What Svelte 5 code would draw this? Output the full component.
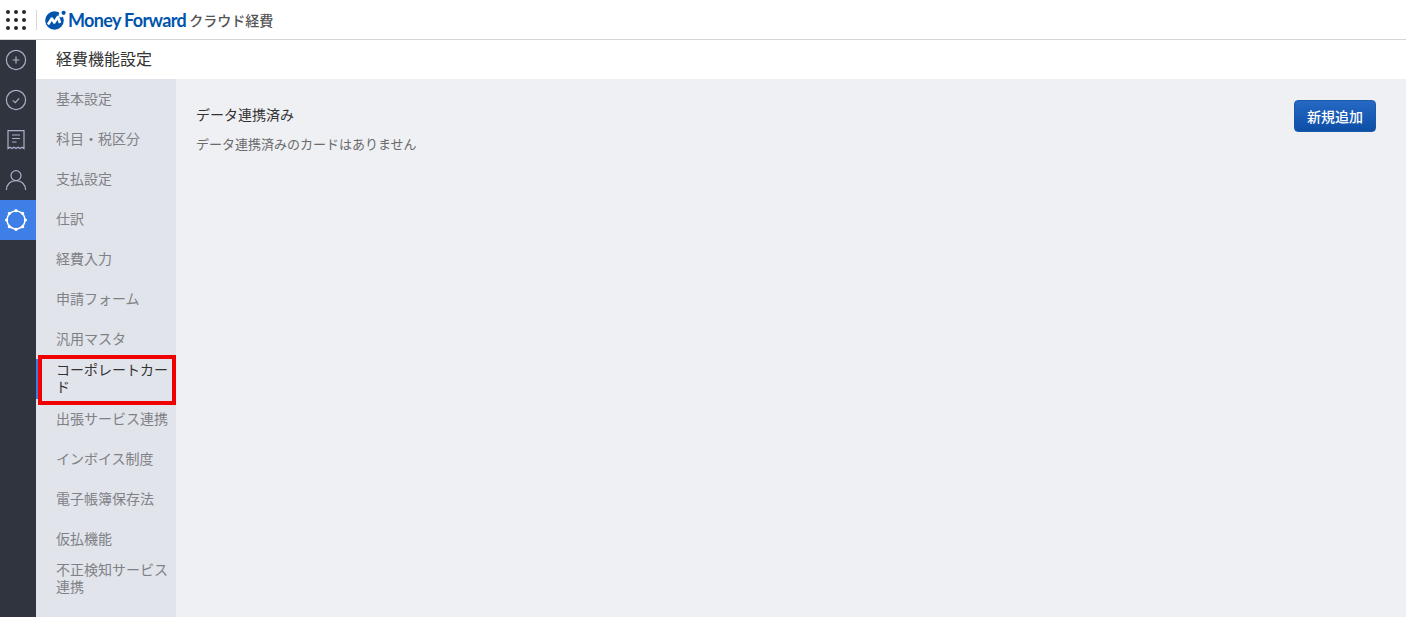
<script>
  const menu = [
    '基本設定', '科目・税区分', '支払設定', '仕訳', '経費入力', '申請フォーム', '汎用マスタ',
    'コーポレートカード', '出張サービス連携', 'インボイス制度', '電子帳簿保存法', '仮払機能', '不正検知サービス連携'
  ]
  const active = 'コーポレートカード'
  const dots = Array(9).fill(0)
  // the eight small knobs around the settings ring
  const nubs = [0, 45, 90, 135, 180, 225, 270, 315]
</script>

<div class="page">
  <header class="topbar">
    <div class="apps">
      {#each dots as _}<i></i>{/each}
    </div>
    <div class="sep"></div>
    <svg class="mark" viewBox="0 0 21 20" width="21" height="20">
      <circle cx="9.5" cy="10.5" r="9.3" fill="#0054ac" />
      <path d="M3 14.5 L6.8 8.5 L9.3 12.5 L13 6.8 L15 13" fill="none" stroke="#fff" stroke-width="2.6" stroke-linejoin="round" />
      <circle cx="16" cy="5" r="2.4" fill="#fff" />
      <circle cx="18.6" cy="2.8" r="2.1" fill="#0054ac" />
    </svg>
    <span class="brand">Money Forward</span>
    <span class="product">クラウド経費</span>
  </header>

  <div class="body">
    <nav class="rail">
      <a class="railitem" href="#add">
        <svg viewBox="0 0 24 24"><circle cx="12" cy="12" r="9.6" /><path d="M12 8.6v6.8M8.6 12h6.8" /></svg>
      </a>
      <a class="railitem" href="#check">
        <svg viewBox="0 0 24 24"><circle cx="12" cy="12" r="9.6" /><path d="M8.8 12.4l2.4 2.2 4-4.2" /></svg>
      </a>
      <a class="railitem" href="#receipt">
        <svg viewBox="0 0 24 24"><path d="M4 2.6h16v18l-2-1.4-2 1.4-2-1.4-2 1.4-2-1.4-2 1.4-2-1.4-2 1.4z" /><path d="M8 7h8M8 10.5h8M8 14h4.5" /></svg>
      </a>
      <a class="railitem" href="#user">
        <svg viewBox="0 0 24 24"><circle cx="12" cy="7.6" r="5" /><path d="M2.4 22c0-5.6 4-9.4 9.6-9.4s9.6 3.8 9.6 9.4" /></svg>
      </a>
      <a class="railitem current" href="#settings">
        <svg viewBox="0 0 24 24">
          <circle cx="12" cy="12" r="9" />
          {#each nubs as deg}
            <circle class="nub" cx="12" cy="2.6" r="1.6" transform="rotate({deg} 12 12)" />
          {/each}
        </svg>
      </a>
    </nav>

    <div class="main">
      <div class="pagetitle">経費機能設定</div>
      <div class="columns">
        <aside class="side">
          {#each menu as item}
            <a class="sideitem" class:active={item === active} href="#menu">
              <span>{item}</span>
              {#if item === active}<span class="highlight"></span>{/if}
            </a>
          {/each}
        </aside>
        <section class="content">
          <div class="text">
            <h2>データ連携済み</h2>
            <p>データ連携済みのカードはありません</p>
          </div>
          <button type="button">新規追加</button>
        </section>
      </div>
    </div>
  </div>
</div>

<style>
  :global(body) {
    margin: 0;
    overflow: hidden;
  }

  .page {
    width: 1406px;
    height: 617px;
    display: flex;
    flex-direction: column;
    font-family: "Liberation Sans", "Noto Sans CJK JP", sans-serif;
    overflow: hidden;
  }

  .topbar {
    height: 39px;
    flex: none;
    display: flex;
    align-items: center;
    background: #fff;
    border-bottom: 1px solid #d4d6da;
  }

  .apps {
    width: 20px;
    margin-left: 6px;
    display: grid;
    grid-template-columns: repeat(3, 4px);
    gap: 4px;
  }

  .apps i {
    width: 4px;
    height: 4px;
    border-radius: 50%;
    background: #24272e;
  }

  .sep {
    width: 1px;
    height: 20px;
    margin-left: 10px;
    background: #d8d8d8;
  }

  .mark {
    margin-left: 8px;
  }

  .brand {
    margin-left: 2px;
    font-family: Lato, sans-serif;
    font-size: 18px;
    font-weight: 700;
    letter-spacing: -0.65px;
    color: #0054ac;
    white-space: nowrap;
  }

  .product {
    margin-left: 3px;
    font-size: 14px;
    font-weight: 500;
    color: #555;
    white-space: nowrap;
  }

  .body {
    flex: 1;
    display: flex;
    min-height: 0;
  }

  .rail {
    width: 36px;
    flex: none;
    background: #2f343f;
    display: flex;
    flex-direction: column;
  }

  .railitem {
    height: 40px;
    box-sizing: border-box;
    padding-right: 4px;
    display: flex;
    align-items: center;
    justify-content: center;
  }

  .railitem svg {
    width: 24px;
    height: 24px;
    fill: none;
    stroke: #a9b2cc;
    stroke-width: 1.2;
  }

  .railitem.current {
    background: #3d7fe6;
  }

  .railitem.current svg {
    stroke: #fff;
    stroke-width: 1.5;
  }

  .railitem .nub {
    fill: #fff;
    stroke: none;
  }

  .main {
    flex: 1;
    display: flex;
    flex-direction: column;
    min-width: 0;
  }

  .pagetitle {
    height: 39px;
    flex: none;
    box-sizing: border-box;
    padding-left: 20px;
    line-height: 39px;
    font-size: 16px;
    color: #333;
    background: #fff;
  }

  .columns {
    flex: 1;
    display: flex;
    min-height: 0;
  }

  .side {
    width: 140px;
    flex: none;
    background: #e1e4eb;
  }

  .sideitem {
    position: relative;
    height: 40px;
    box-sizing: border-box;
    padding: 0 8px 0 20px;
    display: flex;
    align-items: center;
    font-size: 14px;
    line-height: 17px;
    color: #7f8186;
    text-decoration: none;
  }

  .sideitem.active {
    color: #333;
    border-left: 2px solid #3d7fe6;
    padding-left: 18px;
  }

  /* red annotation box drawn over the current menu item */
  .highlight {
    position: absolute;
    left: 0;
    top: -4px;
    width: 138px;
    height: 50px;
    box-sizing: border-box;
    border: 4px solid #f00000;
  }

  .content {
    flex: 1;
    background: #eff0f4;
    padding: 21px 30px 0 20px;
    display: flex;
    justify-content: space-between;
    align-items: flex-start;
  }

  .text {
    padding-top: 7px;
  }

  h2 {
    margin: 0;
    font-size: 14px;
    font-weight: 400;
    line-height: 17px;
    color: #333;
  }

  p {
    margin: 12px 0 0;
    font-size: 13px;
    line-height: 17px;
    color: #6b6b6b;
  }

  button {
    width: 82px;
    height: 32px;
    padding: 0;
    border: 1px solid #1a5ba8;
    border-radius: 4px;
    background: linear-gradient(#2569c4, #0d4ea6);
    color: #fff;
    font-family: inherit;
    font-size: 14px;
    font-weight: 500;
  }
</style>
